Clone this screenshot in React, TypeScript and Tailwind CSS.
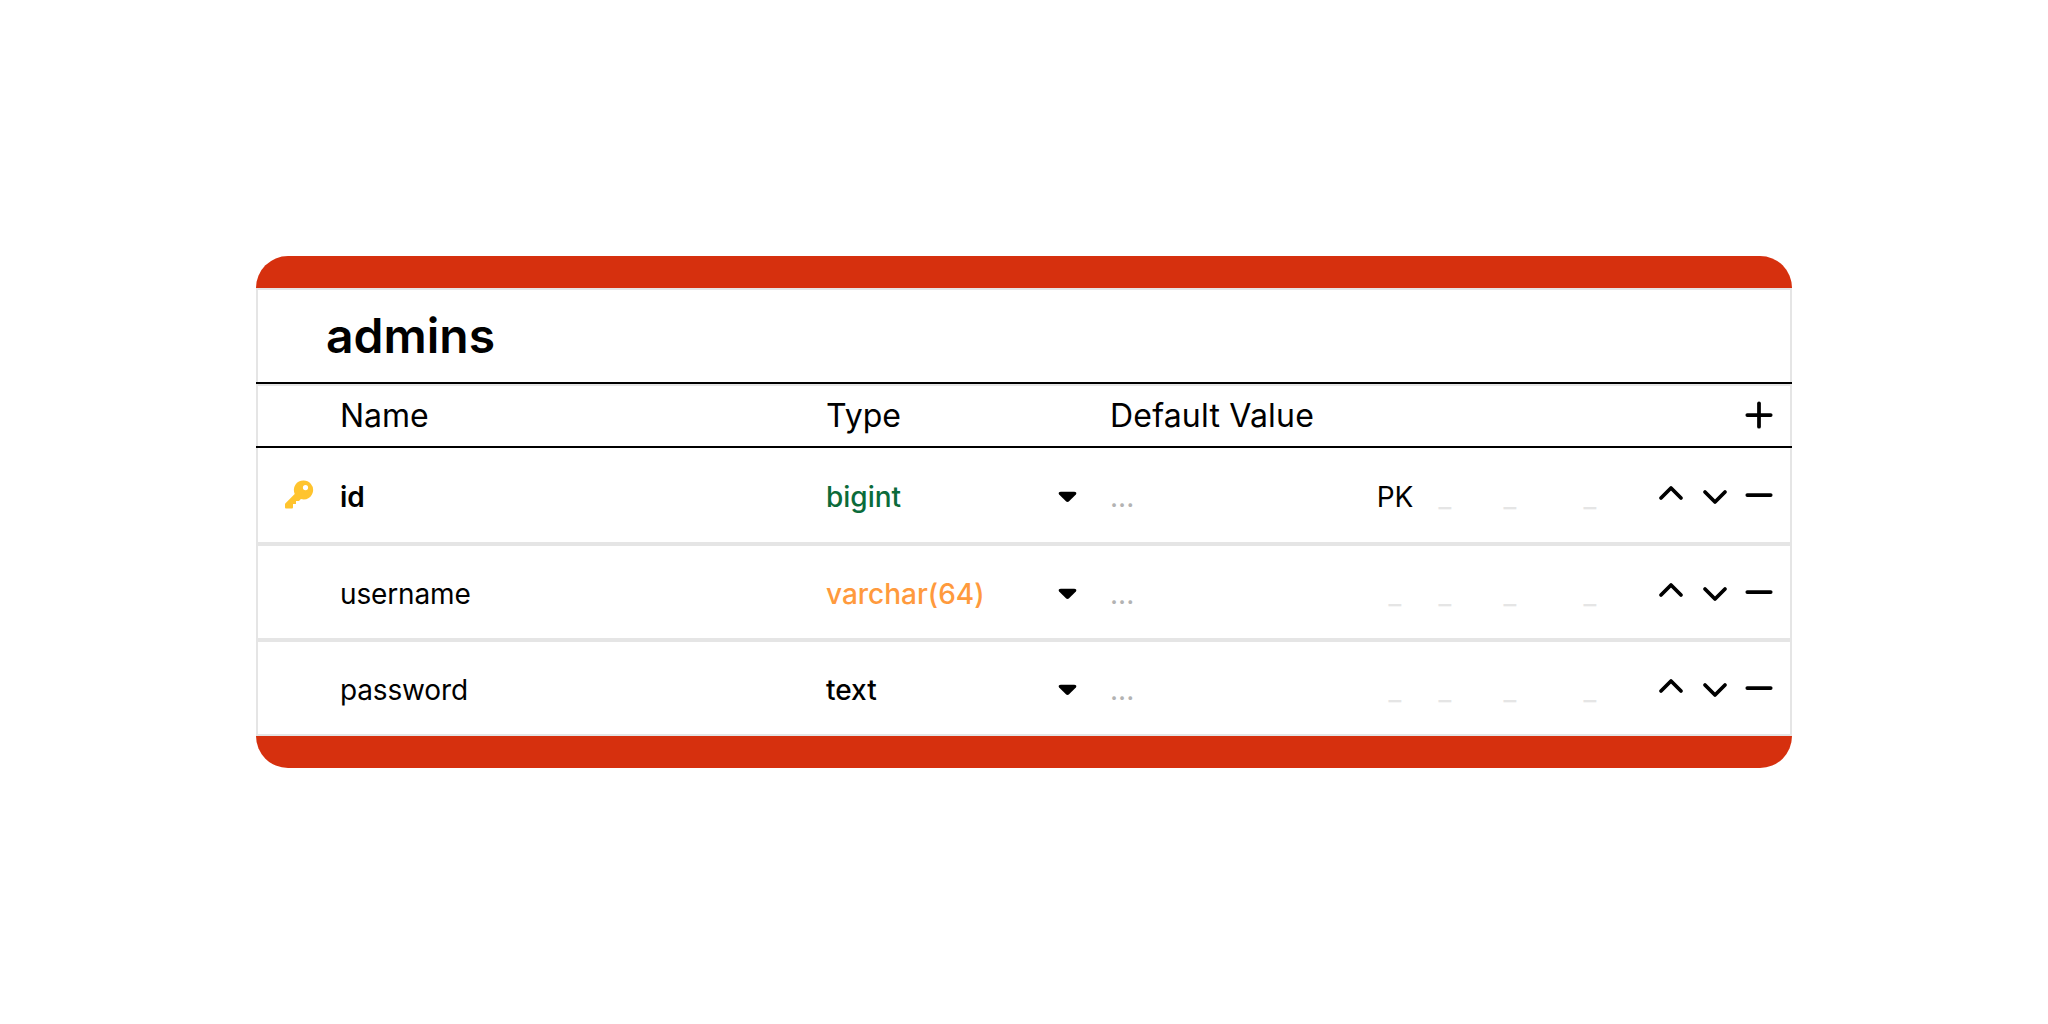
import React from "react";
import { ChevronDown, ChevronUp, Minus, Plus } from "lucide-react";

type Row = {
  name: string;
  type: string;
  typeClass: string;
  primary?: boolean;
  height: string;
};

const rows: Row[] = [
  { name: "id", type: "bigint", typeClass: "text-[#0b6b3a]", primary: true, height: "h-[94px]" },
  { name: "username", type: "varchar(64)", typeClass: "text-[#ff9a3d]", height: "h-[92px]" },
  { name: "password", type: "text", typeClass: "text-black", height: "h-[92px]" },
];

const KeyIcon = () => (
  <svg width="30" height="30" viewBox="0 0 30 30" className="block">
    <path
      fill="#ffc42e"
      fillRule="evenodd"
      d="M19.5 0.5a9.5 9.5 0 1 1-2.6 18.6l-1.9 1.9h-3v3h-3v3.2c0 .8-.5 1.3-1.3 1.3H2.3c-.8 0-1.3-.5-1.3-1.3v-2.8c0-.5.2-.9.5-1.2l9.200-9.300A9.500 9.500 0 0 1 19.500 .5zm2 4.500a2.600 2.600 0 1 0 0 5.200 2.600 2.600 0 0 0 0-5.200z"
    />
  </svg>
);

const Caret = () => (
  <svg width="19" height="12" viewBox="0 0 20 12" className="block">
    <path d="M3 0.500h14c2 0 3 1.500 1.800 2.800l-7.400 7.500c-.7.700-2.100.700-2.800 0L1.200 3.300C0 2 1 .5 3 .5z" fill="#000" />
  </svg>
);

const flagSlots = ["w-[50px]", "w-[50px]", "w-[80px]", "w-[80px]"];
const flags = (primary?: boolean) => (primary ? ["PK", "_", "_", "_"] : ["_", "_", "_", "_"]);

const App = () => {
  return (
    <div className="flex h-screen w-full items-center justify-center bg-white font-['Inter',sans-serif] text-black">
      <div className="flex w-[1536px] flex-col">
        <div className="h-8 rounded-t-[32px] bg-[#d6300e]" />

        <div className="flex h-[94px] items-center border-x-2 border-t-2 border-[#e5e5e5] pl-[68px] text-[48px] font-semibold">
          admins
        </div>
        <div className="h-0.5 bg-black" />

        {/* Column headers */}
        <div className="flex h-[62px] items-center border-x-2 border-t-2 border-[#e5e5e5] text-[32px]">
          <span className="ml-[82px] w-[486px]">Name</span>
          <span className="w-[284px]">Type</span>
          <span className="tracking-[0.2px]">Default Value</span>
          <Plus size={40} strokeWidth={2.25} className="mr-[11px] mb-0.5 ml-auto" />
        </div>
        <div className="h-0.5 bg-black" />

        {rows.map((row) => (
          <div
            key={row.name}
            className={`flex items-center border-x-2 pt-1 text-[28px] ${row.height} border-[#e5e5e5]`}
          >
            <div className="mb-1 flex w-[82px] justify-end pr-[26px]">{row.primary && <KeyIcon />}</div>
            <span className={`w-[486px] ${row.primary ? "font-semibold" : "tracking-[-0.15px]"}`}>{row.name}</span>
            <div className="flex w-[284px] items-center">
              <span className={`w-[232px] font-medium ${row.typeClass}`}>{row.type}</span>
              <Caret />
            </div>
            <span className="w-[260px] text-[#b3b3b3]">...</span>
            <div className="flex">
              {flags(row.primary).map((flag, j) => (
                <span key={j} className={`text-center ${flagSlots[j]} ${flag === "PK" ? "text-black" : "text-[#e5e5e5]"}`}>
                  {flag}
                </span>
              ))}
            </div>
            <div className="mr-[11px] mb-1 ml-auto flex items-center gap-1">
              <ChevronUp size={40} strokeWidth={2.25} className="mb-1" />
              <ChevronDown size={40} strokeWidth={2.25} className="mt-1" />
              <Minus size={40} strokeWidth={2.25} />
            </div>
          </div>
        )).flatMap((el, i) => (i < rows.length - 1 ? [el, <div key={i} className="h-1 bg-[#e5e5e5]" />] : [el]))}
        <div className="h-0.5 bg-[#e5e5e5]" />

        <div className="h-8 rounded-b-[32px] bg-[#d6300e]" />
      </div>
    </div>
  );
};

export default App;
